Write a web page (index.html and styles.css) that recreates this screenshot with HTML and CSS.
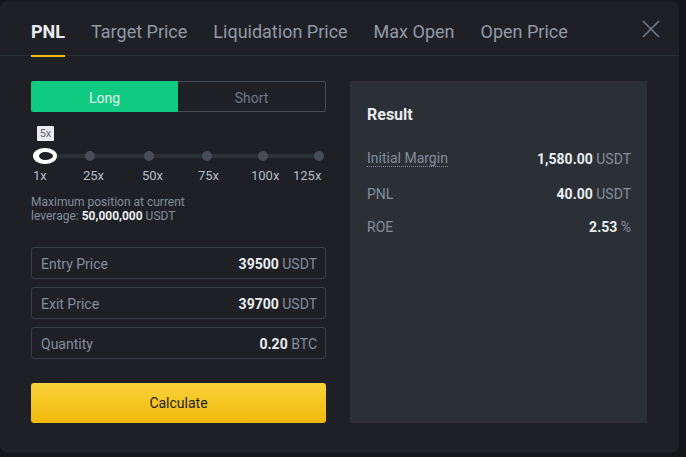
FILE: index.html
```
<!DOCTYPE html>
<html lang="en">
 <head>
  <meta charset="utf-8">
  <title>PNL Calculator</title>
  <link rel="stylesheet" href="styles.css">
 </head>
 <body>
  <div class="modal">
   <div class="tabs">
    <span class="tab active">PNL</span>
    <span class="tab">Target Price</span>
    <span class="tab">Liquidation Price</span>
    <span class="tab">Max Open</span>
    <span class="tab">Open Price</span>
    <svg class="close" width="18" height="18" viewBox="0 0 18 18">
     <path d="M1 1 L17 17 M17 1 L1 17" stroke="#707a8a" stroke-width="1.6" fill="none"/>
    </svg>
   </div>

   <div class="body">
    <div class="form">
     <div class="toggle">
      <span class="side long">Long</span>
      <span class="side short">Short</span>
     </div>

     <div class="slider">
      <span class="tip">5x</span>
      <div class="track">
       <span class="dot" style="left: 57px"></span>
       <span class="dot" style="left: 116px"></span>
       <span class="dot" style="left: 174px"></span>
       <span class="dot" style="left: 230px"></span>
       <span class="dot" style="left: 286px"></span>
       <span class="handle"></span>
      </div>
      <div class="marks">
       <span style="left: 2px">1x</span>
       <span style="left: 52px">25x</span>
       <span style="left: 111px">50x</span>
       <span style="left: 167px">75x</span>
       <span style="left: 220px">100x</span>
       <span style="left: 262px">125x</span>
      </div>
     </div>

     <p class="maxpos">Maximum position at current<br>leverage: <b>50,000,000</b> USDT</p>

     <div class="fields">
      <div class="field"><span class="lbl">Entry Price</span><span class="val"><b>39500</b> USDT</span></div>
      <div class="field"><span class="lbl">Exit Price</span><span class="val"><b>39700</b> USDT</span></div>
      <div class="field"><span class="lbl">Quantity</span><span class="val"><b>0.20</b> BTC</span></div>
     </div>

     <button class="calc">Calculate</button>
    </div>

    <div class="result">
     <h3>Result</h3>
     <div class="row"><span class="lbl dotted">Initial Margin</span><span class="val"><b>1,580.00</b> USDT</span></div>
     <div class="row"><span class="lbl">PNL</span><span class="val"><b>40.00</b> USDT</span></div>
     <div class="row last"><span class="lbl">ROE</span><span class="val"><b>2.53</b> %</span></div>
    </div>
   </div>
  </div>
 </body>
</html>
```

FILE: styles.css
```
body { margin: 0; background: #15161a; font-family: Roboto, "Liberation Sans", sans-serif; }

.modal { width: 679px; height: 452px; margin-top: 1px; background: #1e2026;
         border-radius: 8px; box-sizing: border-box; }

/* tab bar */
.tabs { display: flex; align-items: center; gap: 26px; height: 55px; padding: 8px 19px 0 31px;
        border-bottom: 1px solid #2b2f36; box-sizing: border-box; }
.tab { position: relative; font-size: 18px; color: #929aa5; line-height: 20px; }
.tab.active { color: #eaecef; font-weight: 700; }
.tab.active::after { content: ""; position: absolute; left: 0; right: 0; bottom: -15px;
                     height: 2px; background: #f0b90b; }
.close { margin-left: auto; margin-top: -6px; }

.body { display: flex; gap: 24px; padding: 25px 31px 0 31px; }

/* left column */
.form { width: 295px; }
.toggle { display: flex; height: 31px; }
.side { flex: 1; display: flex; align-items: center; justify-content: center; font-size: 14px; padding-top: 2px; }
.long { background: #0ecb81; color: #eaecef; border-radius: 2px 0 0 2px; }
.short { border: 1px solid #474d57; border-left: none; color: #707a8a; border-radius: 0 2px 2px 0; }

.slider { position: relative; height: 60px; margin-top: 14px; }
.tip { position: absolute; left: 6px; top: 0; width: 17px; height: 15px; background: #eaecef;
       color: #5e6673; font-size: 11px; line-height: 15px; text-align: center; border-radius: 1px; }
.track { position: absolute; left: 2px; right: 6px; top: 28px; height: 4px; background: #2b2f36;
         border-radius: 2px; }
.dot { position: absolute; top: -3px; width: 10px; height: 10px; margin-left: -5px;
       border-radius: 50%; background: #474d57; }
.handle { position: absolute; left: 0; top: -6px; width: 14px; height: 8px; border: 4px solid #fff;
          border-left-width: 6px; border-radius: 50%; background: #1e2026; }
.marks { position: absolute; left: 0; right: 0; top: 42px; height: 17px; }
.marks span { position: absolute; font-size: 13px; color: #b7bdc6; }

.maxpos { margin: 9px 0 0 0; font-size: 12px; line-height: 14px; color: #848e9c; }
.maxpos b { color: #eaecef; }

.fields { display: flex; flex-direction: column; gap: 8px; margin-top: 24px; }
.field { display: flex; justify-content: space-between; align-items: center; height: 32px;
         padding: 1px 8px 0 9px; border: 1px solid #3b404a; border-radius: 3px; box-sizing: border-box;
         font-size: 14px; }
.field .lbl { color: #848e9c; }
.val { color: #848e9c; font-size: 14px; }
.val b { color: #eaecef; }

.calc { display: block; width: 100%; height: 40px; margin-top: 24px; border: none; border-radius: 3px;
        background: linear-gradient(#f8d33a, #f0b90b); color: #1e2026; font-family: inherit; font-size: 14px; }

/* right column */
.result { width: 297px; height: 342px; background: #2b2f36; padding: 24px 16px 0 17px; box-sizing: border-box; }
.result h3 { margin: 0 0 16px 0; font-size: 16px; color: #eaecef; line-height: 20px; }
.row { display: flex; justify-content: space-between; align-items: center; height: 35px; font-size: 14px; }
.row.last { height: 32px; }
.row .lbl { color: #848e9c; }
.dotted { border-bottom: 1px dotted #848e9c; }
```
